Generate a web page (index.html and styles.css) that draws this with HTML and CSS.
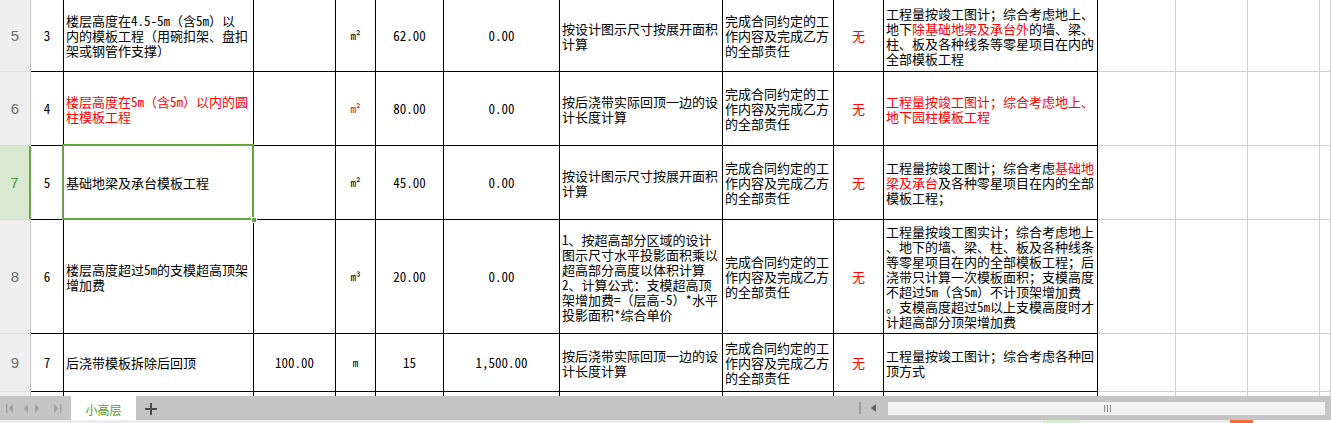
FILE: index.html
```html
<!DOCTYPE html>
<html lang="zh-CN">
<head>
<meta charset="utf-8">
<title>小高层</title>
<link rel="stylesheet" href="styles.css">
</head>
<body>
<div class="sheet">
  <div class="grid">
    <!-- row 5 -->
    <div class="c rh">5</div>
    <div class="c ctr">3</div>
    <div class="c txt"><div>楼层高度在4.5-5m<span class="fw">（</span>含5m<span class="fw">）</span>以<br>内的模板工程<span class="fw">（</span>用碗扣架、盘扣<br>架或钢管作支撑<span class="fw">）</span></div></div>
    <div class="c"></div>
    <div class="c ctr unit">m²</div>
    <div class="c ctr">62.00</div>
    <div class="c ctr">0.00</div>
    <div class="c txt"><div>按设计图示尺寸按展开面积<br>计算</div></div>
    <div class="c txt"><div>完成合同约定的工<br>作内容及完成乙方<br>的全部责任</div></div>
    <div class="c ctr red">无</div>
    <div class="c txt"><div>工程量按竣工图计；综合考虑地上、<br>地下<span class="red">除基础地梁及承台外</span>的墙、梁、<br>柱、板及各种线条等零星项目在内的<br>全部模板工程</div><span class="mark"></span></div>
    <div class="c g"></div><div class="c g"></div><div class="c g"></div><div class="c g"></div>

    <!-- row 6 -->
    <div class="c rh">6</div>
    <div class="c ctr">4</div>
    <div class="c txt red"><div>楼层高度在5m<span class="fw">（</span>含5m<span class="fw">）</span>以内的圆<br>柱模板工程</div></div>
    <div class="c"></div>
    <div class="c ctr unit red">m²</div>
    <div class="c ctr">80.00</div>
    <div class="c ctr">0.00</div>
    <div class="c txt"><div>按后浇带实际回顶一边的设<br>计长度计算</div></div>
    <div class="c txt"><div>完成合同约定的工<br>作内容及完成乙方<br>的全部责任</div></div>
    <div class="c ctr red">无</div>
    <div class="c txt red"><div>工程量按竣工图计；综合考虑地上、<br>地下园柱模板工程</div></div>
    <div class="c g"></div><div class="c g"></div><div class="c g"></div><div class="c g"></div>

    <!-- row 7 -->
    <div class="c rh rh-sel">7</div>
    <div class="c ctr">5</div>
    <div class="c txt"><div>基础地梁及承台模板工程</div></div>
    <div class="c"></div>
    <div class="c ctr unit">m²</div>
    <div class="c ctr">45.00</div>
    <div class="c ctr">0.00</div>
    <div class="c txt"><div>按设计图示尺寸按展开面积<br>计算</div></div>
    <div class="c txt"><div>完成合同约定的工<br>作内容及完成乙方<br>的全部责任</div></div>
    <div class="c ctr red">无</div>
    <div class="c txt"><div>工程量按竣工图计；综合考虑<span class="red">基础地</span><br><span class="red">梁及承台</span>及各种零星项目在内的全部<br>模板工程；</div></div>
    <div class="c g"></div><div class="c g"></div><div class="c g"></div><div class="c g"></div>

    <!-- row 8 -->
    <div class="c rh">8</div>
    <div class="c ctr">6</div>
    <div class="c txt"><div>楼层高度超过5m的支模超高顶架<br>增加费</div></div>
    <div class="c"></div>
    <div class="c ctr unit">m³</div>
    <div class="c ctr">20.00</div>
    <div class="c ctr">0.00</div>
    <div class="c txt"><div>1、按超高部分区域的设计<br>图示尺寸水平投影面积乘以<br>超高部分高度以体积计算<br>2、计算公式：支模超高顶<br>架增加费=<span class="fw">（</span>层高-5<span class="fw">）</span>*水平<br>投影面积*综合单价</div></div>
    <div class="c txt"><div>完成合同约定的工<br>作内容及完成乙方<br>的全部责任</div></div>
    <div class="c ctr red">无</div>
    <div class="c txt"><div>工程量按竣工图实计；综合考虑地上<br>、地下的墙、梁、柱、板及各种线条<br>等零星项目在内的全部模板工程；后<br>浇带只计算一次模板面积；支模高度<br>不超过5m<span class="fw">（</span>含5m<span class="fw">）</span>不计顶架增加费<br>。支模高度超过5m以上支模高度时才<br>计超高部分顶架增加费</div></div>
    <div class="c g"></div><div class="c g"></div><div class="c g"></div><div class="c g"></div>

    <!-- row 9 -->
    <div class="c rh">9</div>
    <div class="c ctr">7</div>
    <div class="c txt"><div>后浇带模板拆除后回顶</div></div>
    <div class="c ctr">100.00</div>
    <div class="c ctr unit">m</div>
    <div class="c ctr">15</div>
    <div class="c ctr">1,500.00</div>
    <div class="c txt"><div>按后浇带实际回顶一边的设<br>计长度计算</div></div>
    <div class="c txt"><div>完成合同约定的工<br>作内容及完成乙方<br>的全部责任</div></div>
    <div class="c ctr red">无</div>
    <div class="c txt"><div>工程量按竣工图计；综合考虑各种回<br>顶方式</div></div>
    <div class="c g"></div><div class="c g"></div><div class="c g"></div><div class="c g"></div>

    <!-- row 10 (partially visible) -->
    <div class="c rh">10</div>
    <div class="c"></div><div class="c"></div><div class="c"></div><div class="c"></div>
    <div class="c"></div><div class="c"></div><div class="c"></div><div class="c"></div>
    <div class="c"></div><div class="c"></div>
    <div class="c g"></div><div class="c g"></div><div class="c g"></div><div class="c g"></div>
  </div>
  <div class="selection"><span class="handle"></span></div>
</div>

<div class="tabbar">
  <div class="nav">
    <svg width="71" height="24" viewBox="0 0 71 24">
      <g fill="#a2a2a2">
        <rect x="6" y="8" width="1.5" height="9"/>
        <polygon points="13,8 8.5,12.5 13,17"/>
        <polygon points="28,8 23.5,12.5 28,17"/>
        <polygon points="35,8 39.5,12.5 35,17"/>
        <polygon points="54,8 58.5,12.5 54,17"/>
        <rect x="60" y="8" width="1.5" height="9"/>
      </g>
    </svg>
  </div>
  <div class="tab">小高层</div>
  <div class="add">
    <svg width="30" height="24" viewBox="0 0 30 24">
      <path d="M9 13H21M15 7V19" stroke="#4a4a4a" stroke-width="2"/>
    </svg>
  </div>
  <div class="spacer"></div>
  <div class="hs">
    <span class="sep"></span>
    <span class="arrow"></span>
    <div class="track"><span class="grip"></span><span class="grip"></span><span class="grip"></span></div>
  </div>
</div>
<div class="strip"></div>
</body>
</html>
```

FILE: styles.css
```css
* { box-sizing: border-box; }

html, body {
  margin: 0;
  padding: 0;
  background: #ffffff;
  overflow: hidden;
}

body {
  width: 1331px;
  height: 423px;
  font-family: "Noto Sans CJK SC", "Noto Sans", sans-serif;
  font-feature-settings: "hwid" 1;
  font-size: 13px;
  color: #000;
}

.fw {
  font-feature-settings: normal;
}

.sheet {
  position: relative;
  height: 396px;
  overflow: hidden;
}

.grid {
  display: grid;
  grid-template-columns: 31px 33px 190px 82px 40px 68px 116px 163px 111px 50px 214px 78px 72px 72px 11px;
  grid-template-rows: 72px 74px 74px 114px 58px 30px;
}

.c {
  display: flex;
  align-items: center;
  border-right: 1px solid #000;
  border-bottom: 1px solid #000;
  line-height: 15px;
  white-space: nowrap;
  overflow: hidden;
  position: relative;
}

.ctr {
  justify-content: center;
}

.txt {
  padding-left: 2px;
}

.unit {
  font-size: 11px;
}

.red { color: #ff0000; }

.g {
  border-right: 1px solid #cfcfcf;
  border-bottom: 1px solid #cfcfcf;
}

.rh {
  justify-content: center;
  background: #efefef;
  color: #6e6e6e;
  font-family: "Liberation Sans", Arial, sans-serif;
  font-feature-settings: normal;
  font-size: 15px;
  border-right: 1px solid #c3c3c3;
  border-bottom: 1px solid #dcdcdc;
}

.rh-sel {
  background: #d9e8d1;
  color: #4f9a2e;
  border-right: 2px solid #62a83c;
}

.mark {
  position: absolute;
  right: 4px;
  top: 40px;
  width: 4px;
  height: 7px;
  border: 1px solid #222;
  border-right: none;
}

.selection {
  position: absolute;
  left: 62px;
  top: 144px;
  width: 192px;
  height: 76px;
  border: 2px solid #62a83c;
  pointer-events: none;
}

.handle {
  position: absolute;
  right: -5px;
  bottom: -5px;
  width: 6px;
  height: 6px;
  background: #62a83c;
  border: 1px solid #fff;
}

.tabbar {
  height: 24px;
  background: #c5c5c5;
  display: flex;
  align-items: stretch;
}

.nav {
  width: 71px;
  display: flex;
}

.tab {
  width: 65px;
  background: #ffffff;
  color: #55a02c;
  font-size: 12px;
  display: flex;
  align-items: center;
  justify-content: center;
  padding-top: 2px;
}

.add {
  width: 30px;
  display: flex;
}

.spacer { flex: 1; }

.hs {
  width: 481px;
  display: flex;
  align-items: center;
}

.sep {
  margin-left: 9px;
  width: 2px;
  height: 12px;
  background: #9c9c9c;
}

.arrow {
  margin-left: 10px;
  width: 0;
  height: 0;
  border-top: 4px solid transparent;
  border-bottom: 4px solid transparent;
  border-right: 5px solid #606060;
}

.track {
  margin-left: 12px;
  width: 437px;
  height: 13px;
  background: #f2f2f2;
  display: flex;
  align-items: center;
  justify-content: center;
  gap: 2px;
  padding-left: 2px;
}

.grip {
  width: 1px;
  height: 7px;
  background: #8a8a8a;
}

.strip {
  height: 3px;
  background: linear-gradient(to right, #ededed 0 1043px, #d3ebc9 1043px 1080px, #ededed 1080px 1230px, #f26b38 1230px 1253px, #ffffff 1253px);
}
```
